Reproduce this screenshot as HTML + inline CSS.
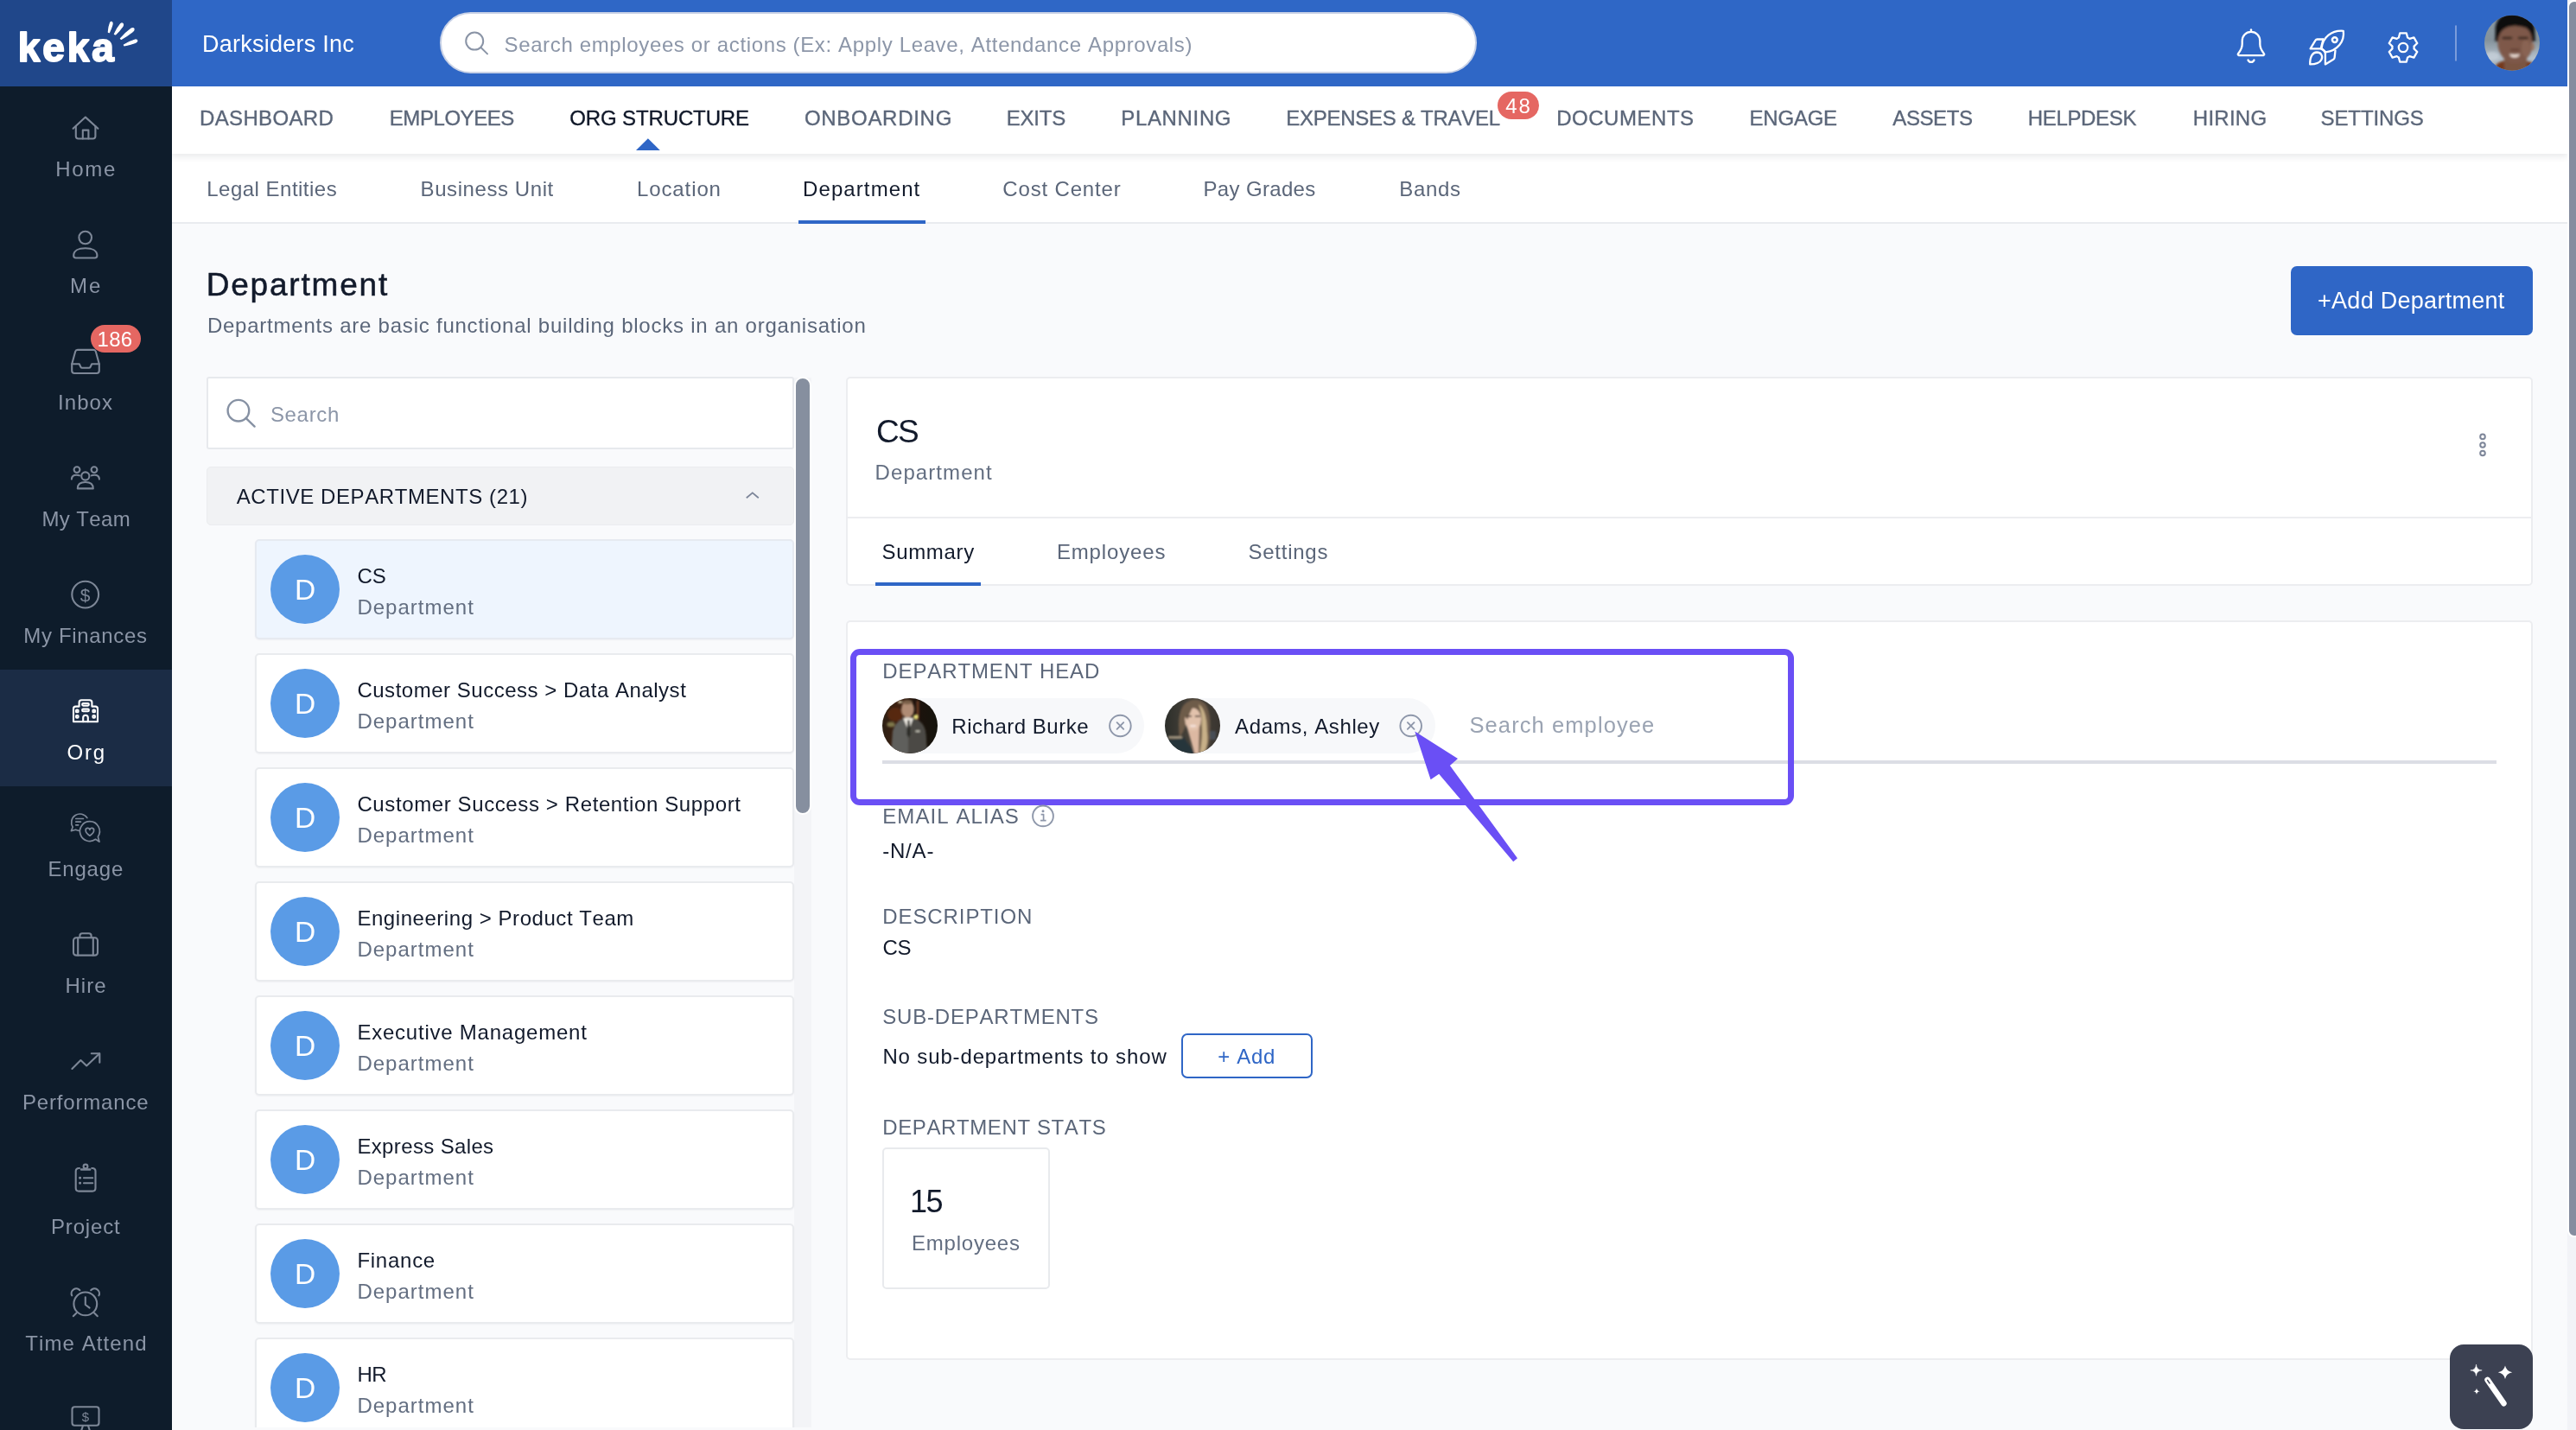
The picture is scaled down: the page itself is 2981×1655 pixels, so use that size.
<!DOCTYPE html>
<html lang="en">
<head>
<meta charset="utf-8">
<title>Keka - Department</title>
<style>
*{box-sizing:border-box;margin:0;padding:0}
html,body{width:2981px;height:1655px;overflow:hidden;background:#f9fafc;font-family:"Liberation Sans",sans-serif}
#page{position:relative;width:2981px;height:1655px;overflow:hidden;background:#f9fafc;will-change:transform}
.a{position:absolute}
.t{position:absolute;white-space:pre;z-index:20;font-kerning:none}
#sidebar{left:0;top:0;width:199px;height:1655px;background:#0e1c2b;z-index:10}
#logo{left:0;top:0;width:199px;height:100px;background:#20478a;z-index:11}
#sbactive{left:0;top:775px;width:199px;height:135px;background:#1b2c45;z-index:11}
#header{left:199px;top:0;width:2772px;height:100px;background:#2f67c6;z-index:9}
#gsearch{left:509px;top:14px;width:1200px;height:71px;border-radius:36px;background:#fff;border:2px solid #c9d2e6;z-index:10}
#nav{left:199px;top:100px;width:2772px;height:78px;background:#fff;box-shadow:0 3px 8px rgba(20,30,50,.10);z-index:8}
#subnav{left:199px;top:178px;width:2772px;height:81px;background:#fff;border-bottom:2px solid #e9ebef;z-index:7}
.ul{height:4px;background:#2f66c6;z-index:9}
.badge{background:#e56762;border-radius:16px;z-index:15}
#addbtn{left:2651px;top:308px;width:280px;height:80px;border-radius:7px;background:#2f66c6;z-index:5}
#lsearch{left:239px;top:436px;width:680px;height:84px;background:#fff;border:2px solid #e7e9ed;border-radius:3px}
#lhead{left:239px;top:540px;width:680px;height:68px;background:#f1f2f4;border:1.5px solid #ebecef;border-radius:5px}
#ltrack{left:919px;top:437px;width:20px;height:1218px;background:#f3f4f7}
#lthumb{left:919px;top:436px;width:20px;height:507px;background:#868f9f;border:2px solid #fff;border-radius:10px}
.card{left:295px;width:624px;height:116px;background:#fff;border:2px solid #e9ebee;border-radius:5px;box-shadow:0 1px 2px rgba(20,30,50,.04)}
.card.sel{background:#eef5fe;border-color:#e6eaf1}
.av{left:313px;width:80px;height:80px;border-radius:50%;background:#5a9be6;z-index:3}
.panel{background:#fff;border:2px solid #ecedf0;border-radius:5px}
#p1{left:979px;top:436px;width:1952px;height:242px}
#p1div{left:981px;top:598px;width:1948px;height:2px;background:#ecedf0}
#p2{left:979px;top:718px;width:1952px;height:856px}
.chip{height:64px;border-radius:32px;background:#f7f8fa}
#hl{left:984px;top:751px;width:1092px;height:181px;border:7px solid #6a4ff5;border-radius:11px;z-index:25}
#dhline{left:1021px;top:880px;width:1868px;height:4px;background:#dcdee5}
#addsub{left:1367px;top:1196px;width:152px;height:52px;border:2.5px solid #2f66c6;border-radius:7px;background:#fff}
#stat{left:1021px;top:1328px;width:194px;height:164px;border:2px solid #e8eaed;border-radius:5px;background:#fff}
#wand{left:2835px;top:1556px;width:96px;height:98px;border-radius:16px;background:#3c4152;z-index:30}
#pthumb{left:2971px;top:0;width:16px;height:1432px;border-radius:8px;background:#858d9f;border:2px solid #fff;z-index:40}
#ptrack{left:2971px;top:0;width:10px;height:1655px;background:#f2f3f7;z-index:39}
svg#ico{position:absolute;left:0;top:0;z-index:30;overflow:visible}
</style>
</head>
<body>
<div id="page">
<div class="a" id="header"></div>
<div class="a" id="gsearch"></div>
<div class="a" id="nav"></div>
<div class="a" id="subnav"></div>
<div class="a ul" style="left:924px;top:254.5px;width:147px"></div>
<div class="a badge" style="left:1733px;top:106px;width:48px;height:32px"></div>
<div class="a" id="sidebar"></div>
<div class="a" id="logo"></div>
<div class="a" id="sbactive"></div>
<div class="a badge" style="left:105px;top:376px;width:58px;height:32px"></div>
<div class="a" id="addbtn"></div>
<div class="a" id="lsearch"></div>
<div class="a" id="lhead"></div>
<div class="a" id="ltrack"></div>
<div class="a" id="lthumb"></div>
<div class="a card sel" style="top:624px"></div><div class="a av" style="top:642px"></div>
<div class="a card" style="top:756px"></div><div class="a av" style="top:774px"></div>
<div class="a card" style="top:888px"></div><div class="a av" style="top:906px"></div>
<div class="a card" style="top:1020px"></div><div class="a av" style="top:1038px"></div>
<div class="a card" style="top:1152px"></div><div class="a av" style="top:1170px"></div>
<div class="a card" style="top:1284px"></div><div class="a av" style="top:1302px"></div>
<div class="a card" style="top:1416px"></div><div class="a av" style="top:1434px"></div>
<div class="a card" style="top:1548px"></div><div class="a av" style="top:1566px"></div>

<div class="a" style="left:230px;top:1652px;width:712px;height:3px;background:#f9fafc;z-index:22"></div>
<div class="a panel" id="p1"></div>
<div class="a" id="p1div"></div>
<div class="a ul" style="left:1013px;top:674px;width:122px"></div>
<div class="a panel" id="p2"></div>
<div class="a chip" style="left:1021px;top:808px;width:303px"></div>
<div class="a chip" style="left:1348px;top:808px;width:313px"></div>
<div class="a" id="dhline"></div>
<div class="a" id="hl"></div>
<div class="a" id="addsub"></div>
<div class="a" id="stat"></div>
<div class="a" id="wand"></div>
<div class="a" id="ptrack"></div>
<div class="a" id="pthumb"></div>
<div class="t" style="left:234.0px;top:38.0px;font-size:27px;line-height:27px;color:#ffffff;letter-spacing:0.24px">Darksiders Inc</div>
<div class="t" style="left:583.5px;top:39.7px;font-size:24px;line-height:24px;color:#8c96a8;letter-spacing:0.64px">Search employees or actions (Ex: Apply Leave, Attendance Approvals)</div>
<div class="t" style="left:231.1px;top:124.7px;font-size:24px;line-height:24px;color:#5b6679;letter-spacing:0.33px;-webkit-text-stroke:.35px #5b6679">DASHBOARD</div>
<div class="t" style="left:450.8px;top:124.7px;font-size:24px;line-height:24px;color:#5b6679;letter-spacing:-0.44px;-webkit-text-stroke:.35px #5b6679">EMPLOYEES</div>
<div class="t" style="left:930.9px;top:124.7px;font-size:24px;line-height:24px;color:#5b6679;letter-spacing:0.71px;-webkit-text-stroke:.35px #5b6679">ONBOARDING</div>
<div class="t" style="left:1164.8px;top:124.7px;font-size:24px;line-height:24px;color:#5b6679;letter-spacing:-0.24px;-webkit-text-stroke:.35px #5b6679">EXITS</div>
<div class="t" style="left:1297.3px;top:124.7px;font-size:24px;line-height:24px;color:#5b6679;letter-spacing:0.65px;-webkit-text-stroke:.35px #5b6679">PLANNING</div>
<div class="t" style="left:1488.3px;top:124.7px;font-size:24px;line-height:24px;color:#5b6679;letter-spacing:-0.27px;-webkit-text-stroke:.35px #5b6679">EXPENSES &amp; TRAVEL</div>
<div class="t" style="left:1801.2px;top:124.7px;font-size:24px;line-height:24px;color:#5b6679;letter-spacing:0.53px;-webkit-text-stroke:.35px #5b6679">DOCUMENTS</div>
<div class="t" style="left:2024.6px;top:124.7px;font-size:24px;line-height:24px;color:#5b6679;letter-spacing:-0.24px;-webkit-text-stroke:.35px #5b6679">ENGAGE</div>
<div class="t" style="left:2190.3px;top:124.7px;font-size:24px;line-height:24px;color:#5b6679;letter-spacing:-0.42px;-webkit-text-stroke:.35px #5b6679">ASSETS</div>
<div class="t" style="left:2346.8px;top:124.7px;font-size:24px;line-height:24px;color:#5b6679;letter-spacing:-0.35px;-webkit-text-stroke:.35px #5b6679">HELPDESK</div>
<div class="t" style="left:2537.8px;top:124.7px;font-size:24px;line-height:24px;color:#5b6679;letter-spacing:0.25px;-webkit-text-stroke:.35px #5b6679">HIRING</div>
<div class="t" style="left:2685.5px;top:124.7px;font-size:24px;line-height:24px;color:#5b6679;letter-spacing:-0.10px;-webkit-text-stroke:.35px #5b6679">SETTINGS</div>
<div class="t" style="left:659.2px;top:124.7px;font-size:24px;line-height:24px;color:#0f1728;letter-spacing:-0.12px;-webkit-text-stroke:.35px #0f1728">ORG STRUCTURE</div>
<div class="t" style="left:239.3px;top:207.0px;font-size:24px;line-height:24px;color:#5b6679;letter-spacing:0.48px">Legal Entities</div>
<div class="t" style="left:486.6px;top:207.0px;font-size:24px;line-height:24px;color:#5b6679;letter-spacing:0.58px">Business Unit</div>
<div class="t" style="left:737.0px;top:207.0px;font-size:24px;line-height:24px;color:#5b6679;letter-spacing:0.89px">Location</div>
<div class="t" style="left:1160.3px;top:207.0px;font-size:24px;line-height:24px;color:#5b6679;letter-spacing:0.84px">Cost Center</div>
<div class="t" style="left:1392.5px;top:207.0px;font-size:24px;line-height:24px;color:#5b6679;letter-spacing:0.34px">Pay Grades</div>
<div class="t" style="left:1619.2px;top:207.0px;font-size:24px;line-height:24px;color:#5b6679;letter-spacing:0.68px">Bands</div>
<div class="t" style="left:929.0px;top:207.0px;font-size:24px;line-height:24px;color:#121a2b;letter-spacing:1.10px">Department</div>
<div class="t" style="left:238.7px;top:310.7px;font-size:37px;line-height:37px;color:#121a2b;letter-spacing:1.80px;-webkit-text-stroke:.5px #121a2b">Department</div>
<div class="t" style="left:239.9px;top:365.4px;font-size:24px;line-height:24px;color:#5b6679;letter-spacing:0.77px">Departments are basic functional building blocks in an organisation</div>
<div class="t" style="left:2682.0px;top:335.4px;font-size:27px;line-height:27px;color:#ffffff;letter-spacing:0.28px">+Add Department</div>
<div class="t" style="left:312.9px;top:467.7px;font-size:24px;line-height:24px;color:#8c96a8;letter-spacing:0.68px">Search</div>
<div class="t" style="left:273.7px;top:562.8px;font-size:24px;line-height:24px;color:#121a2b;letter-spacing:0.58px">ACTIVE DEPARTMENTS (21)</div>
<div class="t" style="left:413.4px;top:654.7px;font-size:24px;line-height:24px;color:#121a2b;letter-spacing:0.06px">CS</div>
<div class="t" style="left:413.4px;top:690.7px;font-size:24px;line-height:24px;color:#636e81;letter-spacing:1.01px">Department</div>
<div class="t" style="left:413.4px;top:786.7px;font-size:24px;line-height:24px;color:#121a2b;letter-spacing:0.52px">Customer Success &gt; Data Analyst</div>
<div class="t" style="left:413.4px;top:822.7px;font-size:24px;line-height:24px;color:#636e81;letter-spacing:1.01px">Department</div>
<div class="t" style="left:413.4px;top:918.7px;font-size:24px;line-height:24px;color:#121a2b;letter-spacing:0.61px">Customer Success &gt; Retention Support</div>
<div class="t" style="left:413.4px;top:954.7px;font-size:24px;line-height:24px;color:#636e81;letter-spacing:1.01px">Department</div>
<div class="t" style="left:413.4px;top:1050.7px;font-size:24px;line-height:24px;color:#121a2b;letter-spacing:0.55px">Engineering &gt; Product Team</div>
<div class="t" style="left:413.4px;top:1086.7px;font-size:24px;line-height:24px;color:#636e81;letter-spacing:1.01px">Department</div>
<div class="t" style="left:413.4px;top:1182.7px;font-size:24px;line-height:24px;color:#121a2b;letter-spacing:0.77px">Executive Management</div>
<div class="t" style="left:413.4px;top:1218.7px;font-size:24px;line-height:24px;color:#636e81;letter-spacing:1.01px">Department</div>
<div class="t" style="left:413.4px;top:1314.7px;font-size:24px;line-height:24px;color:#121a2b;letter-spacing:0.36px">Express Sales</div>
<div class="t" style="left:413.4px;top:1350.7px;font-size:24px;line-height:24px;color:#636e81;letter-spacing:1.01px">Department</div>
<div class="t" style="left:413.4px;top:1446.7px;font-size:24px;line-height:24px;color:#121a2b;letter-spacing:0.74px">Finance</div>
<div class="t" style="left:413.4px;top:1482.7px;font-size:24px;line-height:24px;color:#636e81;letter-spacing:1.01px">Department</div>
<div class="t" style="left:413.4px;top:1578.7px;font-size:24px;line-height:24px;color:#121a2b;letter-spacing:-0.44px">HR</div>
<div class="t" style="left:413.4px;top:1614.7px;font-size:24px;line-height:24px;color:#636e81;letter-spacing:1.01px">Department</div>
<div class="t" style="left:1014.0px;top:480.7px;font-size:37px;line-height:37px;color:#121a2b;letter-spacing:-1.73px">CS</div>
<div class="t" style="left:1012.6px;top:534.7px;font-size:24px;line-height:24px;color:#636e81;letter-spacing:1.08px">Department</div>
<div class="t" style="left:1020.5px;top:627.2px;font-size:24px;line-height:24px;color:#121a2b;letter-spacing:0.67px">Summary</div>
<div class="t" style="left:1222.9px;top:627.2px;font-size:24px;line-height:24px;color:#5b6679;letter-spacing:0.85px">Employees</div>
<div class="t" style="left:1444.5px;top:627.2px;font-size:24px;line-height:24px;color:#5b6679;letter-spacing:0.74px">Settings</div>
<div class="t" style="left:1021.3px;top:765.1px;font-size:24px;line-height:24px;color:#5b6679;letter-spacing:0.88px">DEPARTMENT HEAD</div>
<div class="t" style="left:1101.3px;top:828.6px;font-size:24px;line-height:24px;color:#121a2b;letter-spacing:0.52px">Richard Burke</div>
<div class="t" style="left:1429.1px;top:828.6px;font-size:24px;line-height:24px;color:#121a2b;letter-spacing:0.59px">Adams, Ashley</div>
<div class="t" style="left:1700.5px;top:827.3px;font-size:25.5px;line-height:25.5px;color:#9aa3b2;letter-spacing:1.09px">Search employee</div>
<div class="t" style="left:1021.3px;top:933.0px;font-size:24px;line-height:24px;color:#5b6679;letter-spacing:1.07px">EMAIL ALIAS</div>
<div class="t" style="left:1021.2px;top:972.9px;font-size:24px;line-height:24px;color:#121a2b;letter-spacing:0.80px">-N/A-</div>
<div class="t" style="left:1021.3px;top:1048.8px;font-size:24px;line-height:24px;color:#5b6679;letter-spacing:0.90px">DESCRIPTION</div>
<div class="t" style="left:1021.4px;top:1084.5px;font-size:24px;line-height:24px;color:#121a2b;letter-spacing:-0.34px">CS</div>
<div class="t" style="left:1021.3px;top:1165.1px;font-size:24px;line-height:24px;color:#5b6679;letter-spacing:0.79px">SUB-DEPARTMENTS</div>
<div class="t" style="left:1021.4px;top:1211.0px;font-size:24px;line-height:24px;color:#121a2b;letter-spacing:0.86px">No sub-departments to show</div>
<div class="t" style="left:1409.2px;top:1211.2px;font-size:24px;line-height:24px;color:#2f66c6;letter-spacing:0.69px">+ Add</div>
<div class="t" style="left:1021.3px;top:1292.7px;font-size:24px;line-height:24px;color:#5b6679;letter-spacing:0.60px">DEPARTMENT STATS</div>
<div class="t" style="left:1053.0px;top:1373.3px;font-size:36px;line-height:36px;color:#121a2b;letter-spacing:-1.43px">15</div>
<div class="t" style="left:1055.0px;top:1426.6px;font-size:24px;line-height:24px;color:#636e81;letter-spacing:0.78px">Employees</div>
<div class="t" style="left:64.2px;top:183.9px;font-size:24px;line-height:24px;color:#8b95a6;letter-spacing:1.71px">Home</div>
<div class="t" style="left:81.0px;top:318.9px;font-size:24px;line-height:24px;color:#8b95a6;letter-spacing:2.00px">Me</div>
<div class="t" style="left:67.1px;top:453.9px;font-size:24px;line-height:24px;color:#8b95a6;letter-spacing:1.05px">Inbox</div>
<div class="t" style="left:48.4px;top:588.9px;font-size:24px;line-height:24px;color:#8b95a6;letter-spacing:0.38px">My Team</div>
<div class="t" style="left:27.3px;top:723.9px;font-size:24px;line-height:24px;color:#8b95a6;letter-spacing:0.67px">My Finances</div>
<div class="t" style="left:77.6px;top:858.9px;font-size:24px;line-height:24px;color:#ffffff;letter-spacing:1.72px">Org</div>
<div class="t" style="left:55.4px;top:993.9px;font-size:24px;line-height:24px;color:#8b95a6;letter-spacing:0.84px">Engage</div>
<div class="t" style="left:75.4px;top:1128.9px;font-size:24px;line-height:24px;color:#8b95a6;letter-spacing:1.04px">Hire</div>
<div class="t" style="left:26.0px;top:1263.9px;font-size:24px;line-height:24px;color:#8b95a6;letter-spacing:0.82px">Performance</div>
<div class="t" style="left:59.0px;top:1407.9px;font-size:24px;line-height:24px;color:#8b95a6;letter-spacing:0.83px">Project</div>
<div class="t" style="left:29.3px;top:1542.7px;font-size:24px;line-height:24px;color:#8b95a6;letter-spacing:1.08px">Time Attend</div>
<div class="t" style="left:112.5px;top:381.1px;font-size:24px;line-height:24px;color:#ffffff;letter-spacing:0.30px">186</div>
<div class="t" style="left:1742.2px;top:110.6px;font-size:24px;line-height:24px;color:#ffffff;letter-spacing:1.84px">48</div>
<div class="t" style="left:340.9px;top:665.6px;font-size:33.5px;line-height:33.5px;color:#ffffff;letter-spacing:0.00px">D</div>
<div class="t" style="left:340.9px;top:797.6px;font-size:33.5px;line-height:33.5px;color:#ffffff;letter-spacing:0.00px">D</div>
<div class="t" style="left:340.9px;top:929.6px;font-size:33.5px;line-height:33.5px;color:#ffffff;letter-spacing:0.00px">D</div>
<div class="t" style="left:340.9px;top:1061.6px;font-size:33.5px;line-height:33.5px;color:#ffffff;letter-spacing:0.00px">D</div>
<div class="t" style="left:340.9px;top:1193.6px;font-size:33.5px;line-height:33.5px;color:#ffffff;letter-spacing:0.00px">D</div>
<div class="t" style="left:340.9px;top:1325.6px;font-size:33.5px;line-height:33.5px;color:#ffffff;letter-spacing:0.00px">D</div>
<div class="t" style="left:340.9px;top:1457.6px;font-size:33.5px;line-height:33.5px;color:#ffffff;letter-spacing:0.00px">D</div>
<div class="t" style="left:340.9px;top:1589.6px;font-size:33.5px;line-height:33.5px;color:#ffffff;letter-spacing:0.00px">D</div>
<svg id="ico" width="2981" height="1655" viewBox="0 0 2981 1655" fill="none" stroke-linecap="round" stroke-linejoin="round">
<defs>
<clipPath id="cpU"><circle cx="2907" cy="49.8" r="32"/></clipPath>
<clipPath id="cpA"><circle cx="1053" cy="840" r="32"/></clipPath>
<clipPath id="cpB"><circle cx="1380" cy="840" r="32"/></clipPath>
</defs>
<text x="20.85" y="71.35" font-family="Liberation Sans, sans-serif" font-weight="700" font-size="46" letter-spacing="2.85" fill="#fff" stroke="#fff" stroke-width="1.9" stroke-linejoin="round" style="font-kerning:none">keka</text>
<!-- logo sparks -->
<g fill="#fff" stroke="#fff" stroke-width="1.2" stroke-linejoin="round">
<path d="M125.3 37.2 Q125.6 31 127.6 26.2 Q128.4 24.8 129.6 25.6 Q130.4 26.4 130 28.4 Q128.6 33.4 126.4 37.6 Z"/>
<path d="M132.4 39.4 Q135.4 32.6 139.6 27.6 Q141 26.4 142.2 27.4 Q143 28.6 142 30.4 Q138.4 35.6 133.6 40 Z"/>
<path d="M139.4 44.6 Q145.6 37.6 152 33 Q154.2 32 155 33.4 Q155.4 35 153.6 36.6 Q147.4 41.6 140.2 45.4 Z"/>
<path d="M143.4 52 Q150.4 47.6 156.4 46 Q158.6 45.8 158.8 47.2 Q158.6 48.6 156.6 49.4 Q150 51.8 143.8 52.8 Z"/>
</g>
<!-- sidebar icons -->
<g stroke="#7d8797" stroke-width="2.1">
<!-- home -->
<path d="M84.6 148.8 L98.9 135.6 L113.4 148.8"/>
<path d="M87.8 146 V157.6 Q87.8 160.5 90.7 160.5 H107.5 Q110.4 160.5 110.4 157.6 V146"/>
<path d="M95.8 160.5 V150.6 H102.4 V160.5"/>
<!-- me -->
<circle cx="98.7" cy="275" r="7.3"/>
<path d="M85.2 295.8 C85.2 290.2 91 287.3 98.8 287.3 C106.6 287.3 112.4 290.2 112.4 295.8 Q112.4 298.5 109.8 298.5 H87.8 Q85.2 298.5 85.2 295.8 Z"/>
<!-- inbox -->
<path d="M83.2 421.2 L87.2 406.8 Q87.8 404.9 89.8 404.9 H108.2 Q110.2 404.9 110.8 406.8 L114.8 421.2 V429 Q114.8 432 111.8 432 H86.2 Q83.2 432 83.2 429 Z"/>
<path d="M83.2 421.2 H91.8 L93.4 424.7 Q93.9 425.8 95.1 425.8 H102.9 Q104.1 425.8 104.6 424.7 L106.2 421.2 H114.8"/>
<!-- my team -->
<circle cx="89" cy="543.6" r="3.4"/><circle cx="109" cy="543.6" r="3.4"/><circle cx="98.8" cy="551" r="4.6"/>
<path d="M89.8 565.4 C89.8 560.6 93.4 558 98.8 558 C104.2 558 107.8 560.6 107.8 565.4 Z"/>
<path d="M82.9 554.6 C82.9 551.4 85.3 549.7 88.6 549.7 Q90.6 549.7 92 550.4"/>
<path d="M114.9 554.6 C114.9 551.4 112.5 549.7 109.2 549.7 Q107.2 549.7 105.8 550.4"/>
<!-- my finances -->
<circle cx="98.7" cy="688.1" r="15.4"/>
<!-- engage -->
<g stroke-width="1.7">
<path d="M100.9 946.6 A9.7 9.7 0 1 0 84.2 957.2 L82.4 961.6 L87.6 960.2 Q89.6 961.2 91.6 961.4"/>
<path d="M87.8 947.5 H96.4 M87.8 951.1 H93.4 M87.8 954.8 H90.6"/>
<path d="M103.9 950.7 A11.4 11.4 0 1 0 110.6 971.3 L115 974.2 L113.4 968.4 A11.4 11.4 0 0 0 103.9 950.7 Z"/>
<path d="M103.9 967.2 C100.4 964.8 99.2 963 99.2 961.2 A2.35 2.35 0 0 1 103.9 960.4 A2.35 2.35 0 0 1 108.6 961.2 C108.6 963 107.4 964.8 103.9 967.2 Z"/>
</g>
<!-- hire -->
<rect x="85" y="1085.3" width="28" height="20.3" rx="3.2"/>
<path d="M92.4 1085.3 V1083 Q92.4 1080.3 95.1 1080.3 H102.9 Q105.6 1080.3 105.6 1083 V1085.3"/>
<path d="M90.2 1085.3 V1105.6 M107.8 1085.3 V1105.6"/>
<!-- performance -->
<path d="M83.4 1237 L93.4 1227 L100.2 1233.4 L115 1219.4"/>
<path d="M105.8 1219.2 H115.3 V1229.8"/>
<!-- project -->
<path d="M92 1352 H91.4 Q87.7 1352 87.7 1355.6 V1375 Q87.7 1378.6 91.3 1378.6 H106.9 Q110.5 1378.6 110.5 1375 V1355.6 Q110.5 1352 106.8 1352 H106.2"/>
<path d="M94 1353.5 H104.2" stroke-width="2.4"/>
<circle cx="99" cy="1350" r="2.4"/>
<path d="M97 1363.3 H107.2 M97 1369.2 H107.2"/>
<path d="M92.5 1363.3 h.2 M92.5 1369.2 h.2" stroke-width="2.9"/>
<!-- time attend -->
<circle cx="98.8" cy="1508.9" r="13.4"/>
<path d="M98.8 1501.4 V1510 L103.6 1513.6"/>
<path d="M83.2 1499.4 A5.6 5.6 0 0 1 92.4 1493.2"/>
<path d="M114.4 1499.4 A5.6 5.6 0 0 0 105.2 1493.2"/>
<path d="M88.6 1519.4 L84.8 1523.2 M109 1519.4 L112.8 1523.2"/>
<!-- payroll -->
<rect x="83.5" y="1628.3" width="31" height="21.4" rx="3"/>
<path d="M96 1650 L94 1656 M102 1650 L104 1656"/>
</g>
<text x="98.7" y="695.6" font-family="Liberation Sans, sans-serif" font-size="21" fill="#7d8797" text-anchor="middle">$</text>
<text x="99" y="1644.6" font-family="Liberation Sans, sans-serif" font-size="15" fill="#7d8797" text-anchor="middle">$</text>
<!-- org (active) -->
<g stroke="#fff" stroke-width="2.1">
<path d="M85 835.3 V820.2 Q85 817.6 87.6 817.6 H91.6 V813 Q91.6 810.3 94.3 810.3 H103.7 Q106.4 810.3 106.4 813 V817.6 H110.4 Q113 817.6 113 820.2 V835.3 Z"/>
<path d="M96.2 835.3 V830.6 A2.8 2.8 0 0 1 101.8 830.6 V835.3"/>
<rect x="95.2" y="814" width="7.6" height="2.6" rx="1"/><rect x="95.2" y="820.6" width="7.6" height="2.6" rx="1"/>
<rect x="88" y="821.6" width="2.6" height="2.6" rx=".8"/><rect x="88" y="828" width="2.6" height="2.6" rx=".8"/>
<rect x="107.4" y="821.6" width="2.6" height="2.6" rx=".8"/><rect x="107.4" y="828" width="2.6" height="2.6" rx=".8"/>
</g>
<!-- global search icon -->
<g stroke="#8a94a6" stroke-width="2"><circle cx="549.2" cy="47.6" r="10"/><path d="M556.5 55 L564 62.4"/></g>
<!-- header icons -->
<g stroke="#fff" stroke-width="2.3">
<!-- bell -->
<path d="M2605 34.3 V36.4"/>
<path d="M2605 36.9 C2598.8 36.9 2594.7 41.5 2594.7 47.5 V51 C2594.7 55.6 2593 58.2 2590.7 61.2 Q2589.1 63.2 2590.2 63.7 Q2590.8 64.1 2591.9 64.1 H2618.1 Q2619.2 64.1 2619.8 63.7 Q2620.9 63.2 2619.3 61.2 C2617 58.2 2615.3 55.6 2615.3 51 V47.5 C2615.3 41.5 2611.2 36.9 2605 36.9 Z"/>
<path d="M2601.5 69.5 A3.75 3.75 0 0 0 2608.5 69.5"/>
<!-- rocket -->
<path d="M2711.8 35.8 C2698 34.8 2688 43 2686.6 56 L2691.4 60.4 C2705 58.6 2713.4 48 2711.8 35.8 Z"/>
<circle cx="2701.8" cy="46.1" r="2.9" stroke-width="2.5"/>
<path d="M2702.5 58.4 L2701.6 66.6 Q2701.4 68 2700.2 68.8 L2690.9 74.4 V60.4"/>
<path d="M2688.4 45.5 H2681.6 Q2680.2 45.5 2679.5 46.7 L2673.6 56.3 H2685.6 Q2689.4 57.6 2690.9 61"/>
<path d="M2685.6 56.3 L2688.4 45.5" stroke-width="2.1"/>
<path d="M2673.2 74.4 C2673 65 2676.6 60.6 2681 60.5 C2686 60.5 2688.4 65 2686.4 69 C2684.4 73 2679.6 74.4 2673.2 74.4 Z"/>
</g>
<!-- gear -->
<g stroke="#fff" stroke-width="2.3">
<circle cx="2781" cy="55" r="5.2"/>
<path d="M2775.88 43.49 L2777.18 38.44 L2784.82 38.44 L2786.12 43.49 A12.60 12.60 0 0 1 2788.41 44.81 L2793.43 43.41 L2797.26 50.03 L2793.53 53.68 A12.60 12.60 0 0 1 2793.53 56.32 L2797.26 59.97 L2793.43 66.59 L2788.41 65.19 A12.60 12.60 0 0 1 2786.12 66.51 L2784.82 71.56 L2777.18 71.56 L2775.88 66.51 A12.60 12.60 0 0 1 2773.59 65.19 L2768.57 66.59 L2764.74 59.97 L2768.47 56.32 A12.60 12.60 0 0 1 2768.47 53.68 L2764.74 50.03 L2768.57 43.41 L2773.59 44.81 A12.60 12.60 0 0 1 2775.88 43.49 Z"/>
</g>
<path d="M2842 30 V70" stroke="#8faae0" stroke-width="1.6"/>
<!-- nav triangle -->
<path d="M736 174 L749.9 160.2 L763.8 174 Z" fill="#2f66c6"/>
<!-- left search icon -->
<g stroke="#8691a3" stroke-width="2.4"><circle cx="275.9" cy="475.2" r="12.3"/><path d="M284.8 484.1 L294.6 493.6"/></g>
<!-- chevron -->
<path d="M863.8 576.3 L870.8 570.4 L877.8 576.3" stroke="#7c8598" stroke-width="1.8" stroke-linecap="butt" stroke-linejoin="miter"/>
<!-- three dots -->
<g stroke="#7d8699" stroke-width="2"><circle cx="2873" cy="505.4" r="2.8"/><circle cx="2873" cy="515" r="2.8"/><circle cx="2873" cy="524.5" r="2.8"/></g>
<!-- chip x icons -->
<g stroke="#8e97aa" stroke-width="1.9">
<circle cx="1296.4" cy="840" r="12.3"/><path d="M1292.6 836.2 L1300.2 843.8 M1300.2 836.2 L1292.6 843.8"/>
<circle cx="1632.7" cy="840" r="12.3"/><path d="M1628.9 836.2 L1636.5 843.8 M1636.5 836.2 L1628.9 843.8"/>
<!-- info -->
<circle cx="1207" cy="944.4" r="11.9"/>
</g>
<g stroke="#8e97aa" stroke-width="1.7" stroke-linecap="butt"><path d="M1204.6 942.6 H1207.6 V949.4 M1204 949.6 H1210.6"/></g>
<circle cx="1207" cy="938.8" r="1.5" fill="#8e97aa"/>
<defs>
<filter id="bl1" x="-20%" y="-20%" width="140%" height="140%"><feGaussianBlur stdDeviation="1.6"/></filter>
<filter id="bl2" x="-20%" y="-20%" width="140%" height="140%"><feGaussianBlur stdDeviation="1.3"/></filter>
<linearGradient id="gU" x1="0" y1="0" x2="0" y2="1"><stop offset="0" stop-color="#8c9aa4"/><stop offset=".45" stop-color="#84929b"/><stop offset=".75" stop-color="#b4c0cb"/><stop offset="1" stop-color="#9aa6ae"/></linearGradient>
<linearGradient id="gA" x1="0" y1="0" x2="1" y2="0"><stop offset="0" stop-color="#2c2014"/><stop offset=".3" stop-color="#3e2010"/><stop offset=".62" stop-color="#1c120c"/><stop offset="1" stop-color="#15140c"/></linearGradient>
<linearGradient id="gB" x1="0" y1="0" x2="1" y2="0"><stop offset="0" stop-color="#2c2e2a"/><stop offset=".5" stop-color="#4a443c"/><stop offset="1" stop-color="#38342f"/></linearGradient>
</defs>
<!-- user avatar -->
<g clip-path="url(#cpU)" stroke="none">
<rect x="2873" y="16" width="68" height="68" fill="url(#gU)"/>
<g filter="url(#bl1)">
<ellipse cx="2884" cy="65" rx="8" ry="5" fill="#c6d0da" opacity=".8"/>
<path d="M2887.6 48 L2887.8 31 Q2890 20 2899 16 L2921 16 Q2931 21 2933 31 L2933.6 48 Z" fill="#0d0c0f"/>
<path d="M2886 84 L2888.6 75 Q2892 72 2896.6 70.6 L2925 71 Q2929 71.6 2932 73.4 L2935 84 Z" fill="#74391a"/>
<rect x="2898" y="64" width="26" height="22" fill="#7a5443"/>
<path d="M2890.4 48.5 Q2891.4 38 2897.6 33.6 Q2902 30.6 2907 30.2 Q2916 29.2 2923.5 32.6 Q2929.4 37 2930 46.2 Q2931.4 57 2927.4 63.6 Q2920.6 73.2 2910.5 73.2 Q2900.4 73.2 2894.4 63.6 Q2890 56.4 2890.4 48.5 Z" fill="#7e5949"/>
<ellipse cx="2923" cy="56" rx="5" ry="10" fill="#94705d" opacity=".5"/>
<ellipse cx="2931" cy="54" rx="2" ry="4.6" fill="#9a7662"/>
<path d="M2903.8 62.4 Q2910 64 2916.2 62.4 Q2914.6 66.4 2910 66.4 Q2905.4 66.4 2903.8 62.4 Z" fill="#f1e3da"/>
<path d="M2896.6 44 H2906.2 M2915 44 H2924.6" stroke="#2c1d17" stroke-width="2.4"/>
<path d="M2906 57.6 H2914.6" stroke="#5e3d30" stroke-width="2"/>
</g>
</g>
<!-- Richard Burke -->
<g clip-path="url(#cpA)" stroke="none">
<rect x="1020" y="807" width="66" height="66" fill="url(#gA)"/>
<g filter="url(#bl2)">
<ellipse cx="1036" cy="827" rx="9" ry="8" fill="#5c2a12" opacity=".85"/>
<ellipse cx="1031" cy="838.4" rx="4.6" ry="3" fill="#857f50" opacity=".9"/>
<ellipse cx="1041.5" cy="812.5" rx="2.4" ry="1.6" fill="#d8d0b0"/>
<path d="M1062 812 V832" stroke="#6a3a22" stroke-width="3"/>
<path d="M1031 873 L1033 846 Q1036 836 1044 832 L1057 831.5 Q1068 835 1071 846 L1073 873 Z" fill="#5f5e5c"/>
<path d="M1051 873 L1051 836 L1060 832 Q1069 836 1071 847 L1073 873 Z" fill="#4b4a45"/>
<ellipse cx="1050.4" cy="820.8" rx="7.4" ry="10" fill="#b08c74"/>
<ellipse cx="1050" cy="812.6" rx="6" ry="2.6" fill="#7a6048"/>
<path d="M1045 830.4 H1057 L1051.4 846 Z" fill="#f0ece4"/>
<path d="M1050.2 833.5 H1052.8 L1053.6 850 L1051.5 854 L1049.4 850 Z" fill="#2a2a26"/>
<ellipse cx="1059.8" cy="829.6" rx="2.6" ry="2.4" fill="#ece47c"/>
<rect x="1059.5" y="845.4" width="5" height="1.8" fill="#cfcdc0"/>
</g>
</g>
<!-- Adams Ashley -->
<g clip-path="url(#cpB)" stroke="none">
<rect x="1347" y="807" width="66" height="66" fill="url(#gB)"/>
<g filter="url(#bl2)">
<path d="M1347 873 L1349 857 L1370 853.5 L1384 873 Z" fill="#26343a"/>
<rect x="1352" y="852" width="16" height="2.6" fill="#a89a84"/>
<rect x="1396" y="846" width="11" height="10" fill="#464d54"/>
<path d="M1365 853 Q1361 822 1373 813 Q1384 806 1394 814 Q1402 824 1400 848 Q1401 862 1395 871 L1386 872 L1387 836 L1373 836 Q1370 848 1365 853 Z" fill="#6e5c48"/>
<path d="M1372.6 838 H1388 L1387 873 H1382.6 Z" fill="#dcb8a2"/>
<ellipse cx="1380.6" cy="832.6" rx="9.4" ry="13.2" fill="#e2c2ac"/>
<path d="M1370 828 Q1371.5 814 1385 812.6 Q1378 820 1374.4 833 Z" fill="#6e5c48"/>
<path d="M1387 815 Q1396.5 821 1396.8 846 Q1399 860 1394 870 L1388.6 871.4 Q1392 850 1390.6 838 Q1391.6 826 1387 815 Z" fill="#c8b088"/>
<path d="M1373.6 828.8 H1378.4 M1383.6 828.8 H1388.4" stroke="#54433a" stroke-width="1.8"/>
<ellipse cx="1380.6" cy="840.2" rx="3.8" ry="1.4" fill="#f4e0d8"/>
</g>
</g>

<!-- arrow -->
<path d="M1637.3 846.5 L1687 877.9 L1677.9 885.9 L1756 993.3 L1751.2 997.3 L1665.2 895.7 L1655.6 902.2 Z" fill="#6a4ff5"/>
<!-- wand -->
<g fill="#fff">
<path d="M2865.5 1579.4 Q2865.9 1585.5 2872.2 1585.9 Q2865.9 1586.3 2865.5 1592.4 Q2865.1 1586.3 2858.8 1585.9 Q2865.1 1585.5 2865.5 1579.4 Z" stroke="#fff" stroke-width=".5"/>
<path d="M2899 1580.6 Q2900.4 1587 2907.2 1588.3 Q2900.4 1589.6 2899 1596 Q2897.6 1589.6 2890.8 1588.3 Q2897.6 1587 2899 1580.6 Z"/>
<path d="M2866 1606.4 Q2866.3 1609.9 2870 1610.2 Q2866.3 1610.5 2866 1614 Q2865.7 1610.5 2862 1610.2 Q2865.7 1609.9 2866 1606.4 Z"/>
</g>
<path d="M2878.6 1597 L2897.4 1624.2" stroke="#fff" stroke-width="6.6"/>
<path d="M2878.6 1597.4 L2881 1600.9" stroke="#3c4152" stroke-width="1.6"/>
</svg>

</div>
</body>
</html>
